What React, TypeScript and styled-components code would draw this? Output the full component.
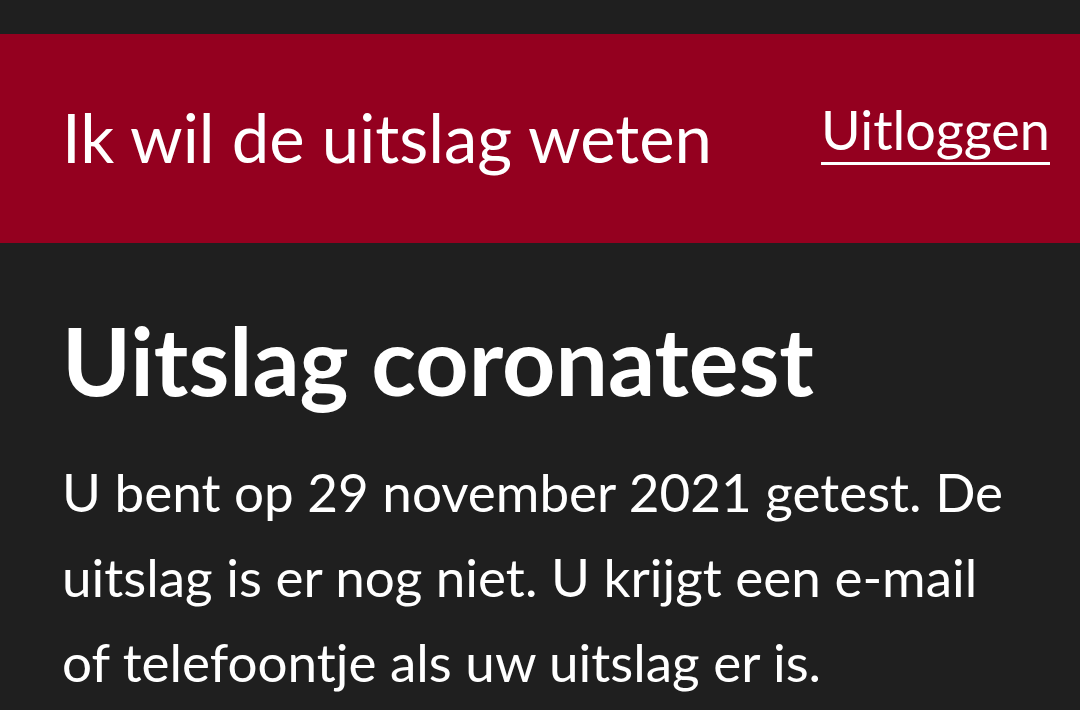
import React from 'react'
import styled, { createGlobalStyle } from 'styled-components'

const GlobalStyle = createGlobalStyle`
  html, body {
    margin: 0;
    padding: 0;
    background: #1f1f1f;
  }
  body {
    font-family: 'Lato', 'Noto Sans', sans-serif;
    color: #fff;
  }
`

const Page = styled.div`
  min-height: 710px;
  padding-top: 34px;
  box-sizing: border-box;
`

const Header = styled.header`
  height: 209px;
  background: #94001f;
  display: flex;
  align-items: center;
  justify-content: space-between;
  padding: 0 30px 0 62px;
  box-sizing: border-box;
`

const Title = styled.div`
  font-size: 67px;
  font-weight: 400;
  color: #fff;
  padding-bottom: 4px;
`

const Logout = styled.a`
  font-size: 54px;
  color: #fff;
  text-decoration: underline;
  text-decoration-thickness: 3px;
  text-underline-offset: 12px;
  padding-bottom: 18px;
`

const Main = styled.main`
  padding: 62px 40px 0 62px;
`

const Heading = styled.h1`
  margin: 0;
  font-size: 93px;
  font-weight: 700;
  line-height: 1.2;
`

const Text = styled.p`
  margin: 32px 0 0;
  font-size: 53px;
  line-height: 85px;
  max-width: 950px;
`

export default function App(): JSX.Element {
  return (
    <>
      <GlobalStyle />
      <Page>
        <Header>
          <Title>Ik wil de uitslag weten</Title>
          <Logout href="#">Uitloggen</Logout>
        </Header>
        <Main>
          <Heading>Uitslag coronatest</Heading>
          <Text>
            U bent op 29 november 2021 getest. De uitslag is er nog niet. U krijgt een e-mail of telefoontje als uw uitslag er is.
          </Text>
        </Main>
      </Page>
    </>
  )
}
